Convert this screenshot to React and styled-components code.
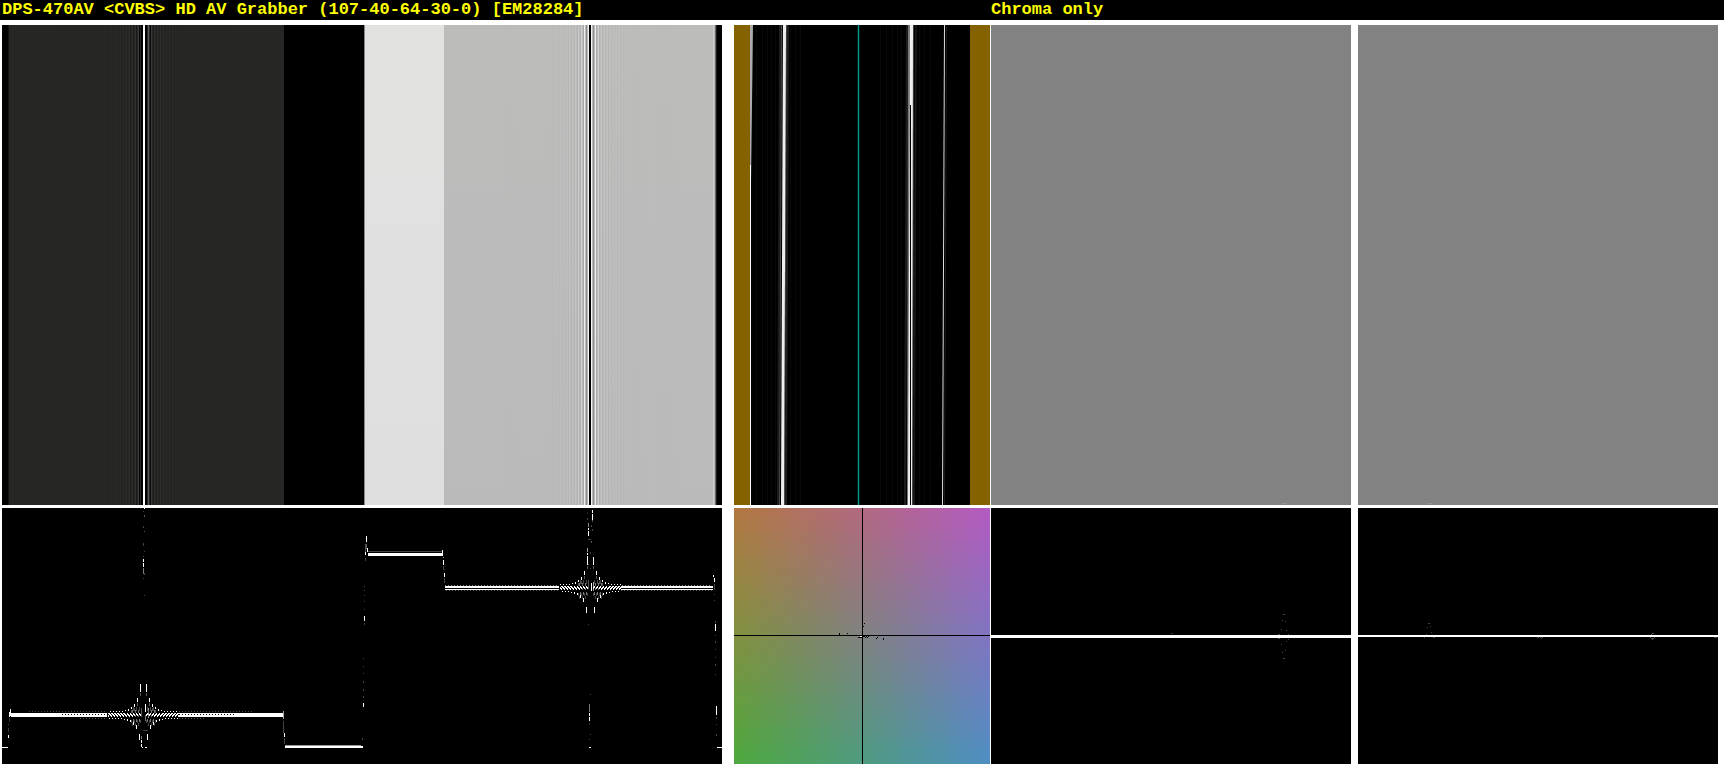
import React from "react";
import styled, { createGlobalStyle } from "styled-components";

const GlobalStyle = createGlobalStyle`
  body {
    margin: 0;
    background: #ffffff;
  }
`;

const FRINGES = Array.from({ length: 28 }, (_, i) => i + 1);

// [x, y, width, height, color] in scope units
const lumaTrace = [
  [0, 239, 6, 1],
  [6, 227, 1, 3],
  [6, 216, 1, 1, "#444"],
  [6, 220, 1, 4, "#333"],
  [7, 210, 1, 4, "#333"],
  [7, 204, 1, 5],
  [8, 201, 1, 7],
  [9, 205, 96, 4],
  [177, 205, 104, 4],
  [281, 203, 1, 8, "#aaa"],
  [281, 213, 1, 12, "#444"],
  [282, 225, 1, 4],
  [282, 230, 1, 6, "#444"],
  [283, 237, 76, 1, "#999"],
  [283, 238, 78, 2],
  [360, 230, 1, 2, "#444"],
  [361, 150, 1, 1, "#444"],
  [361, 158, 1, 1, "#444"],
  [361, 165, 1, 1, "#444"],
  [361, 173, 1, 2, "#444"],
  [361, 181, 1, 2, "#444"],
  [361, 188, 1, 2, "#444"],
  [361, 195, 1, 4],
  [362, 78, 1, 1, "#444"],
  [362, 82, 1, 1, "#444"],
  [362, 87, 1, 1, "#444"],
  [362, 93, 1, 1, "#444"],
  [362, 101, 1, 1, "#444"],
  [362, 108, 1, 5],
  [362, 115, 1, 2, "#444"],
  [363, 36, 1, 8, "#555"],
  [363, 44, 1, 3],
  [363, 50, 1, 3, "#444"],
  [364, 28, 1, 6],
  [364, 36, 1, 5, "#555"],
  [365, 40, 1, 4],
  [366, 43, 75, 1, "#444"],
  [366, 45, 75, 3],
  [440, 42, 1, 6],
  [441, 49, 1, 1, "#999"],
  [441, 52, 1, 5],
  [441, 58, 1, 4, "#444"],
  [442, 65, 1, 4],
  [442, 70, 1, 5, "#444"],
  [443, 78, 114, 2],
  [443, 81, 114, 1],
  [619, 78, 92, 2],
  [619, 81, 92, 1],
  [711, 67, 1, 2],
  [712, 70, 1, 4],
  [712, 76, 1, 6, "#444"],
  [712, 86, 1, 1, "#444"],
  [712, 92, 1, 1, "#444"],
  [713, 113, 1, 2, "#444"],
  [713, 116, 1, 7],
  [713, 127, 1, 1, "#444"],
  [713, 133, 1, 2, "#444"],
  [713, 141, 1, 1, "#444"],
  [713, 149, 1, 1, "#444"],
  [713, 156, 1, 2, "#444"],
  [713, 166, 1, 1, "#444"],
  [714, 198, 1, 9],
  [714, 209, 1, 2, "#444"],
  [714, 216, 1, 1, "#444"],
  [714, 226, 1, 2, "#444"],
  [715, 239, 5, 1],
  // spike of the left pulse
  [142, 0, 1, 1],
  [141, 3, 1, 1, "#444"],
  [142, 7, 1, 2, "#555"],
  [141, 18, 1, 2, "#444"],
  [142, 23, 1, 1, "#555"],
  [141, 35, 1, 3, "#444"],
  [142, 43, 1, 1, "#444"],
  [141, 48, 1, 1, "#555"],
  [141, 51, 1, 3],
  [141, 55, 1, 4],
  [141, 60, 1, 6, "#777"],
  [142, 65, 1, 2, "#444"],
  [141, 70, 1, 1, "#444"],
  [142, 87, 1, 1, "#444"],
  [139, 228, 1, 3, "#777"],
  [139, 232, 1, 3],
  [139, 236, 1, 3],
  [140, 239, 1, 1],
  [143, 239, 2, 1],
  [139, 200, 1, 9, "#555"],
  [143, 196, 1, 8],
  [143, 207, 1, 6, "#777"],
  [146, 200, 1, 10, "#aaa"],
  [141, 222, 5, 1, "#444"],
  // spike of the right pulse
  [590, 2, 1, 3],
  [590, 6, 1, 6],
  [590, 12, 1, 2, "#555"],
  [585, 5, 1, 1, "#444"],
  [585, 10, 1, 2, "#444"],
  [586, 15, 1, 4, "#888"],
  [586, 20, 1, 2],
  [586, 23, 1, 5],
  [589, 17, 1, 2, "#444"],
  [590, 21, 1, 2, "#444"],
  [586, 31, 3, 1, "#444"],
  [589, 33, 1, 2, "#555"],
  [585, 40, 1, 4, "#999"],
  [585, 45, 1, 2],
  [585, 48, 1, 4],
  [588, 44, 1, 2, "#444"],
  [586, 56, 1, 1, "#444"],
  [588, 60, 1, 1, "#444"],
  [589, 75, 1, 8],
  [586, 72, 1, 9, "#555"],
  [591, 74, 1, 9, "#aaa"],
  [586, 116, 1, 1, "#444"],
  [588, 186, 1, 1, "#444"],
  [587, 196, 1, 8, "#777"],
  [587, 205, 1, 3],
  [587, 209, 1, 4],
  [587, 216, 1, 1, "#444"],
  [588, 226, 1, 1, "#444"],
  [587, 231, 1, 1, "#444"],
  [587, 239, 2, 1],
];

const uTrace = [
  [0, 127, 360, 3],
  [180, 125, 2, 1, "#333"],
  [292, 106, 2, 1, "#444"],
  [291, 112, 1, 1, "#444"],
  [294, 113, 1, 1, "#444"],
  [290, 121, 1, 1, "#444"],
  [295, 122, 1, 1, "#444"],
  [287, 126, 2, 1, "#444"],
  [297, 126, 1, 1, "#444"],
  [287, 130, 2, 1, "#444"],
  [297, 131, 1, 1, "#444"],
  [295, 133, 1, 1, "#444"],
  [290, 136, 1, 1, "#444"],
  [294, 142, 1, 1, "#444"],
  [291, 144, 1, 1, "#444"],
  [292, 150, 2, 1, "#444"],
];

const vTrace = [
  [0, 127, 360, 2],
  [70, 115, 2, 1, "#444"],
  [69, 119, 1, 1, "#444"],
  [72, 118, 1, 1, "#444"],
  [73, 124, 1, 1, "#444"],
  [68, 126, 1, 1, "#444"],
  [66, 129, 1, 1, "#444"],
  [75, 129, 2, 1, "#444"],
  [179, 129, 2, 1, "#444"],
  [182, 129, 1, 1, "#444"],
  [184, 129, 1, 1, "#444"],
  [183, 130, 1, 1, "#444"],
  [294, 125, 2, 1, "#555"],
  [293, 126, 1, 1, "#555"],
  [292, 129, 1, 1, "#555"],
  [296, 129, 1, 1, "#555"],
  [293, 130, 3, 1, "#444"],
  [294, 131, 1, 1, "#555"],
  [356, 129, 3, 1, "#444"],
];

const vectorDots = [
  [105, 125, 1, 2],
  [113, 125, 1, 1],
  [130, 115, 1, 1],
  [129, 118, 1, 1],
  [124, 129, 4, 1],
  [129, 128, 2, 1],
  [131, 129, 1, 1],
  [132, 128, 1, 1],
  [133, 129, 1, 1],
  [134, 128, 1, 1],
  [142, 130, 1, 1],
  [143, 129, 1, 1],
  [149, 130, 1, 2],
];

// slanted timing lines: [x at top, x at bottom, width, color]
const drifts = [
  [45, 43, 2, "#1c1c1c"],
  [47, 45, 1, "#4a4a4a"],
  [52, 50, 1, "#4a4a4a"],
  [53, 51, 2, "#1e1e1e"],
  [49, 47, 3, "#eeeeee"],
  [172, 170, 2, "#1c1c1c"],
  [174, 173, 2, "#777777"],
  [176, 174, 2, "#f2f2f2"],
  [177, 177, 2, "#eeeeee"],
  [179, 178, 1, "#444444"],
  [181, 179, 2, "#161616"],
  [210, 208, 1, "#dddddd"],
  [212, 210, 1, "#1c1c1c"],
];

const Marks = ({ items, fill }) =>
  items.map(([x, y, width, height, color], i) => (
    <rect key={i} x={x} y={y} width={width} height={height} fill={color || fill} />
  ));

// decaying ringing on both sides of a pulse
const ringing = (center, base, reach) => {
  const marks = [];
  [-1, 1].forEach((side) => {
    for (let d = 3; d < reach; d += 1) {
      const x = center + side * d;
      const amp = Math.max(4, Math.min(31, Math.round(105 / d - 1)));
      const dash = Math.max(1, Math.round(amp / 4));
      if (d % 3 === 0) {
        marks.push([x, base - amp, 1, dash]);
        marks.push([x, base - 1, 1, 2]);
        if (amp > 7) marks.push([x, base - amp + dash + 1, 1, 3, "#555"]);
        if (amp > 7) marks.push([x, base + 5, 1, 3, "#444"]);
      } else if (d % 3 === 1) {
        marks.push([x, base + amp - dash, 1, dash]);
        marks.push([x, base - 2, 1, 2]);
        if (amp > 7) marks.push([x, base + 4, 1, 3, "#777"]);
        if (amp > 7) marks.push([x, base - 8, 1, 4, "#444"]);
      } else {
        marks.push([x, base, 1, 2, d > 8 ? "#fff" : "#777"]);
        if (d > 18) marks.push([x, base - 2, 1, 1]);
        if (amp > 8) marks.push([x, base - 5, 1, 3, "#777"]);
        if (amp > 8) marks.push([x, base + 8, 1, 3, "#444"]);
      }
    }
  });
  return marks;
};

// dotted borders that run on along a flat level
const dotted = (from, to, y, color) => {
  const marks = [];
  for (let x = from; x < to; x += 3) {
    marks.push([x, y, 1, 1, color]);
  }
  return marks;
};

const lumaItems = [
  ...lumaTrace,
  ...ringing(141, 207, 36),
  ...ringing(588, 80, 31),
  ...dotted(27, 105, 203, "#444"),
  ...dotted(78, 105, 210, "#555"),
  ...dotted(177, 252, 203, "#444"),
  ...dotted(177, 204, 210, "#555"),
  ...dotted(60, 105, 206, "#000"),
  ...dotted(177, 234, 206, "#000"),
  ...dotted(443, 557, 77, "#888"),
  ...dotted(444, 557, 82, "#555"),
  ...dotted(620, 710, 77, "#888"),
  ...dotted(619, 710, 82, "#555"),
];

const LumaPicture = () => (
  <Scope viewBox="0 0 720 480" role="img" aria-label="Luma picture">
    <defs>
      <linearGradient id="brightBar" x2="0" y2="1">
        <stop offset="0" stopColor="#e2e2e1" />
        <stop offset="1" stopColor="#dedfde" />
      </linearGradient>
      <linearGradient id="greyBar" x2="0" y2="1">
        <stop offset="0" stopColor="#bcbdbb" />
        <stop offset="1" stopColor="#b9bab9" />
      </linearGradient>
    </defs>
    <rect width="720" height="480" fill="#000" />
    <rect x="6" width="1" height="480" fill="#111" />
    <rect x="7" width="275" height="480" fill="#262725" />
    <rect x="362" width="1" height="480" fill="#888" />
    <rect x="363" width="79" height="480" fill="url(#brightBar)" />
    <rect x="442" width="271" height="480" fill="url(#greyBar)" />
    <rect x="711" width="1" height="480" fill="#cacaca" />
    <rect x="713" width="1" height="480" fill="#666" />
    <rect x="714" width="1" height="480" fill="#1c1c1c" />
    {FRINGES.map((n) => {
      const fade = 1 / n ** 1.3;
      return (
        <g key={n}>
          <rect x={142 - n * 3} width="1" height="480" fill="#fff" opacity={0.24 * fade} />
          <rect x={143 + n * 3} width="1" height="480" fill="#fff" opacity={0.24 * fade} />
          <rect x={140 - n * 3} width="1" height="480" fill="#000" opacity={0.8 * fade} />
          <rect x={145 + n * 3} width="1" height="480" fill="#000" opacity={0.8 * fade} />
          <rect x={585 - n * 3} width="1" height="480" fill="#fff" opacity={0.75 * fade} />
          <rect x={590 + n * 3} width="1" height="480" fill="#fff" opacity={0.75 * fade} />
          <rect x={587 - n * 3} width="1" height="480" fill="#000" opacity={0.25 * fade} />
          <rect x={588 + n * 3} width="1" height="480" fill="#000" opacity={0.25 * fade} />
        </g>
      );
    })}
    <rect x="139" width="6" height="480" fill="#000" />
    <rect x="141" width="2" height="480" fill="#fff" />
    <rect x="586" width="4" height="480" fill="#f4f4f4" />
    <rect x="587" width="2" height="480" fill="#000" />
  </Scope>
);

const Timing = () => (
  <Scope viewBox="0 0 256 480" role="img" aria-label="Line timing">
    <rect width="256" height="480" fill="#000" />
    {[22, 28, 33, 37, 41, 56, 61, 66, 146, 152, 158, 163, 167, 185, 190, 196].map((x) => (
      <rect key={x} x={x} width="1" height="480" fill="#090909" />
    ))}
    <rect width="16" height="480" fill="#856200" />
    <rect x="236" width="20" height="480" fill="#856200" />
    <g shapeRendering="geometricPrecision">
      <path d="M16 0H19L17 160V480H16Z" fill="#aaa" />
      <path d="M16 140H17V480H16Z" fill="#fff" />
      {drifts.map(([top, bottom, width, color], i) => (
        <path
          key={i}
          d={`M${top} 0h${width}L${bottom + width} 480h${-width}z`}
          fill={color}
        />
      ))}
      <path d="M176 80H177V480H176Z" fill="#000" />
    </g>
    <rect x="123" width="3" height="480" fill="#00211e" />
    <rect x="124" width="1" height="480" fill="#009c8c" />
  </Scope>
);

const Flat = ({ label, blip }) => (
  <Scope viewBox="0 0 360 480" role="img" aria-label={label}>
    <rect width="360" height="480" fill="#828282" />
    <rect x={blip} y="478" width="5" height="1" fill="#939393" />
  </Scope>
);

const Waveform = ({ label, width, items }) => (
  <Scope viewBox={`0 0 ${width} 256`} role="img" aria-label={label}>
    <rect width={width} height="256" fill="#000" />
    <Marks items={items} fill="#fff" />
  </Scope>
);

const Vectorscope = () => (
  <Scope viewBox="0 0 256 256" role="img" aria-label="Vectorscope">
    <defs>
      <linearGradient id="upperHues">
        <stop offset="0" stopColor="#b27740" />
        <stop offset="1" stopColor="#b45ac2" />
      </linearGradient>
      <linearGradient id="lowerHues">
        <stop offset="0" stopColor="#4eaa3e" />
        <stop offset="1" stopColor="#4e8fc4" />
      </linearGradient>
      <linearGradient id="fade" x2="0" y2="1">
        <stop offset="0" stopColor="#fff" />
        <stop offset="1" stopColor="#fff" stopOpacity="0" />
      </linearGradient>
      <mask id="fadeDown">
        <rect width="256" height="256" fill="url(#fade)" />
      </mask>
    </defs>
    <rect width="256" height="256" fill="url(#lowerHues)" />
    <rect width="256" height="256" fill="url(#upperHues)" mask="url(#fadeDown)" />
    <rect y="127" width="256" height="1" fill="#000" />
    <rect x="128" width="1" height="256" fill="#000" />
    <Marks items={vectorDots} fill="#000" />
    <rect x="126" y="128" width="2" height="1" fill="#fff" />
  </Scope>
);

const App = () => {
  return (
    <main>
      <GlobalStyle />
      <Header>
        <Title>{"DPS-470AV <CVBS> HD AV Grabber (107-40-64-30-0) [EM28284]"}</Title>
        <Subtitle>Chroma only</Subtitle>
      </Header>
      <Panels>
        <LumaGroup>
          <LumaPicture />
          <Waveform label="Luma waveform" width={720} items={lumaItems} />
        </LumaGroup>
        <TimingGroup>
          <Timing />
          <Vectorscope />
        </TimingGroup>
        <ChromaGroup>
          <Flat label="Chroma U picture" blip={291} />
          <Waveform label="Chroma U waveform" width={360} items={uTrace} />
        </ChromaGroup>
        <LastGroup>
          <Flat label="Chroma V picture" blip={69} />
          <Waveform label="Chroma V waveform" width={360} items={vTrace} />
        </LastGroup>
      </Panels>
    </main>
  );
};

export default App;

const Columns = styled.div`
  display: grid;
  grid-template-columns: 720fr 12px 256fr 1px 360fr 7px 360fr;
  padding: 0 6px 0 2px;
`;

const Header = styled(Columns).attrs({ as: "header" })`
  background: #000000;
  color: #ffff00;
  font-family: "Liberation Mono", "Courier New", monospace;
`;

const Title = styled.h1`
  grid-column: 1;
  margin: 0;
  font-size: 17px;
  font-weight: bold;
  line-height: 20px;
  white-space: nowrap;
`;

const Subtitle = styled.h2`
  grid-column: 5;
  margin: 0;
  font-size: 17px;
  font-weight: bold;
  line-height: 20px;
  white-space: nowrap;
`;

const Panels = styled(Columns)`
  padding-top: 5px;
`;

const Group = styled.section`
  display: flex;
  flex-direction: column;
  gap: 3px;
  min-width: 0;
`;

const LumaGroup = styled(Group)`
  grid-column: 1;
`;

const TimingGroup = styled(Group)`
  grid-column: 3;
`;

const ChromaGroup = styled(Group)`
  grid-column: 5;
`;

const LastGroup = styled(Group)`
  grid-column: 7;
`;

const Scope = styled.svg`
  display: block;
  width: 100%;
  height: auto;
  shape-rendering: crispEdges;
`;
